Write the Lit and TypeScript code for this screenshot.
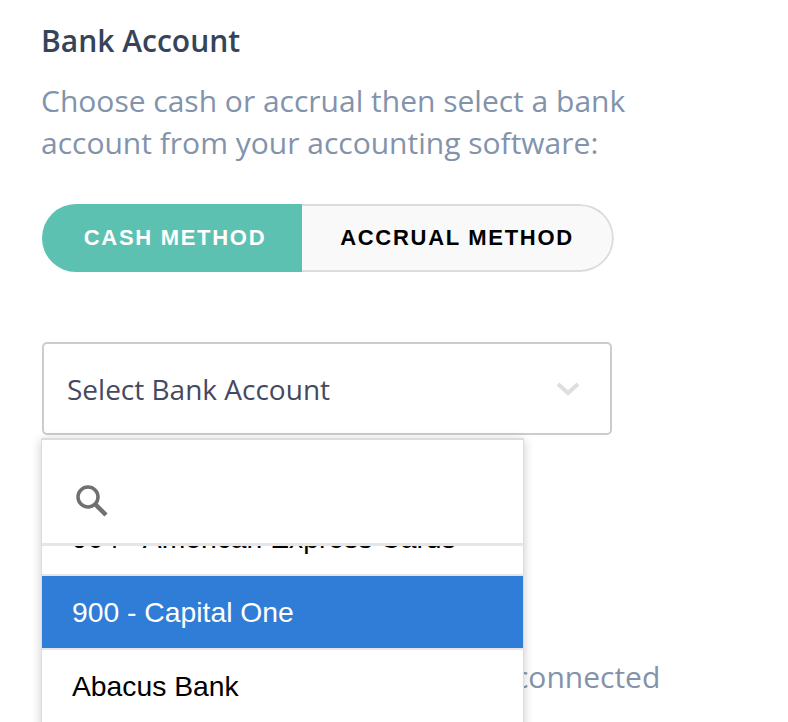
import { LitElement, html, css } from "lit";
import { customElement } from "lit/decorators.js";

@customElement("app-root")
export class AppRoot extends LitElement {
  static styles = css`
    :host {
      display: block;
      height: 722px;
      overflow: hidden;
      background: #fff;
      font-family: "Open Sans", sans-serif;
    }
    .page {
      display: flex;
      flex-direction: column;
      align-items: flex-start;
      padding: 22px 0 0 41px;
    }
    h2 {
      margin: 0;
      font-size: 30px;
      line-height: 38px;
      font-weight: 600;
      color: #364459;
    }
    .desc {
      margin: 20px 0 0;
      width: 620px;
      font-size: 30px;
      line-height: 42px;
      color: #8293ab;
    }
    .toggle {
      margin: 40px 0 0 1px;
      display: flex;
      width: 572px;
      height: 68px;
      border-radius: 34px;
      overflow: hidden;
      font-family: "Liberation Sans", Arial, sans-serif;
      font-size: 22px;
      font-weight: 700;
      letter-spacing: 1.7px;
    }
    .toggle div {
      display: flex;
      align-items: center;
      justify-content: center;
      box-sizing: border-box;
    }
    .cash {
      width: 260px;
      padding-left: 6px;
      background: #5cc1b0;
      color: #fff;
    }
    .accrual {
      flex: 1;
      background: #f9f9f9;
      color: #000;
      border: 2px solid #dcdcdc;
      border-left: none;
      border-radius: 0 34px 34px 0;
    }
    .field {
      position: relative;
      margin: 70px 0 0 1px;
    }
    .select {
      box-sizing: border-box;
      width: 570px;
      height: 93px;
      padding: 1px 30px 0 23px;
      display: flex;
      align-items: center;
      justify-content: space-between;
      border: 2px solid #cccccc;
      border-radius: 5px;
      font-size: 28px;
      color: #444a60;
    }
    .chevron {
      width: 24px;
      height: 16px;
      display: block;
    }
    .dropdown {
      position: absolute;
      top: 96px;
      left: -1px;
      box-sizing: border-box;
      width: 483px;
      height: 300px;
      display: flex;
      flex-direction: column;
      background: #fff;
      border: 1px solid #dcdcdc;
      border-top-width: 2px;
      border-bottom: none;
      box-shadow: 0 2px 10px rgba(0, 0, 0, 0.2);
    }
    .search {
      flex: none;
      box-sizing: border-box;
      height: 106px;
      display: flex;
      align-items: center;
      padding: 18px 0 0 33px;
      border-bottom: 3px solid #e6e6e6;
    }
    .search svg {
      width: 34px;
      height: 34px;
      display: block;
    }
    .list {
      flex: 1;
      overflow: hidden;
      font-family: "Liberation Sans", Arial, sans-serif;
      font-size: 28.3px;
      color: #000;
    }
    .option {
      box-sizing: border-box;
      height: 74px;
      display: flex;
      align-items: center;
      padding-left: 30px;
      border-bottom: 2px solid #e6e6e6;
    }
    .option.active {
      background: #2f7dd6;
      color: #fff;
    }
    .below {
      margin: 221px 0 0 -1px;
      font-size: 30px;
      line-height: 42px;
      color: #8293ab;
      white-space: nowrap;
    }
  `;

  firstUpdated() {
    const list = this.renderRoot.querySelector(".list") as HTMLElement;
    list.scrollTop = 44;
  }

  render() {
    return html`
      <div class="page">
        <h2>Bank Account</h2>
        <p class="desc">Choose cash or accrual then select a bank account from your accounting software:</p>
        <div class="toggle">
          <div class="cash">CASH METHOD</div>
          <div class="accrual">ACCRUAL METHOD</div>
        </div>
        <div class="field">
          <div class="select">
            <span>Select Bank Account</span>
            <svg class="chevron" viewBox="0 0 24 16" fill="none" stroke="#dedede" stroke-width="4">
              <path d="M2 3l10 9 10-9" />
            </svg>
          </div>
          <div class="dropdown">
            <div class="search">
              <svg viewBox="0 0 34 34" fill="none" stroke="#707070">
                <circle cx="13" cy="13" r="10" stroke-width="3.5" />
                <path d="M20 20l11 11" stroke-width="4.5" />
              </svg>
            </div>
            <div class="list">
              <div class="option">904 - American Express Cards</div>
              <div class="option active">900 - Capital One</div>
              <div class="option">Abacus Bank</div>
              <div class="option">Bank of America</div>
              <div class="option">Chase</div>
            </div>
          </div>
        </div>
        <p class="below">Select the bank account you have connected</p>
      </div>
    `;
  }
}
